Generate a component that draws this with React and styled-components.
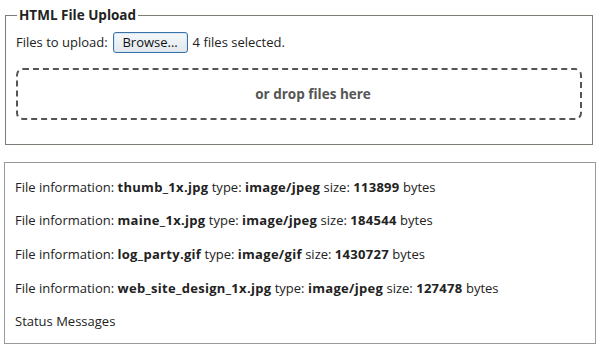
import React from "react";
import styled, { createGlobalStyle } from "styled-components";

const Global = createGlobalStyle`
  html, body { margin: 0; padding: 0; background: #fff; }
  body { font-family: "Open Sans", "Segoe UI", sans-serif; font-size: 13px; color: #222; }
`;

const Page = styled.div`
  width: 600px;
  height: 350px;
  padding: 6px 4px 0 4px;
  box-sizing: border-box;
  display: flex;
  flex-direction: column;
  gap: 17px;
`;

const Fieldset = styled.fieldset`
  margin: 0 3px 0 1px;
  padding: 7px 10px 24px 10px;
  border: 1px solid #7d7d76;
  min-width: 0;
`;

const Legend = styled.legend`
  font-weight: 700;
  font-size: 13.5px;
  padding: 0 2px;
  margin-left: 1px;
  color: #222;
`;

const Row = styled.div`
  display: flex;
  align-items: center;
  gap: 5px;
  height: 22px;
`;

const Button = styled.button`
  font-family: inherit;
  font-size: 13px;
  color: #111;
  height: 21px;
  width: 75px;
  padding: 0;
  border: 1px solid #3a72a8;
  border-radius: 3px;
  background: linear-gradient(#f4f8fb, #e3e8ec);
  box-shadow: inset 0 0 0 1px #d6e6f4;
`;

const DropZone = styled.div`
  margin-top: 15px;
  height: 48px;
  padding-left: 28px;
  border: 2px dashed #555;
  border-radius: 7px;
  display: flex;
  align-items: center;
  justify-content: center;
  font-weight: 700;
  font-size: 13.5px;
  color: #555;
`;

const InfoBox = styled.div`
  border: 1px solid #999;
  height: 182px;
  box-sizing: border-box;
  padding: 7px 10px 0 10px;
`;

const Line = styled.p`
  margin: 0;
  height: 33.6px;
  display: flex;
  align-items: center;
  white-space: pre;
`;

const Strong = styled.b`
  font-weight: 700;
  letter-spacing: 0.3px;
`;

const files = [
  { name: "thumb_1x.jpg", type: "image/jpeg", size: 113899 },
  { name: "maine_1x.jpg", type: "image/jpeg", size: 184544 },
  { name: "log_party.gif", type: "image/gif", size: 1430727 },
  { name: "web_site_design_1x.jpg", type: "image/jpeg", size: 127478 },
];

export default function App() {
  return (
    <>
      <Global />
      <Page>
        <Fieldset>
          <Legend>HTML File Upload</Legend>
          <Row>
            <span>Files to upload:</span>
            <Button>Browse...</Button>
            <span>4 files selected.</span>
          </Row>
          <DropZone>or drop files here</DropZone>
        </Fieldset>
        <InfoBox>
          {files.map((f) => (
            <Line key={f.name}>
              File information: <Strong>{f.name}</Strong> type: <Strong>{f.type}</Strong> size: <Strong>{f.size}</Strong> bytes
            </Line>
          ))}
          <Line>Status Messages</Line>
        </InfoBox>
      </Page>
    </>
  );
}
